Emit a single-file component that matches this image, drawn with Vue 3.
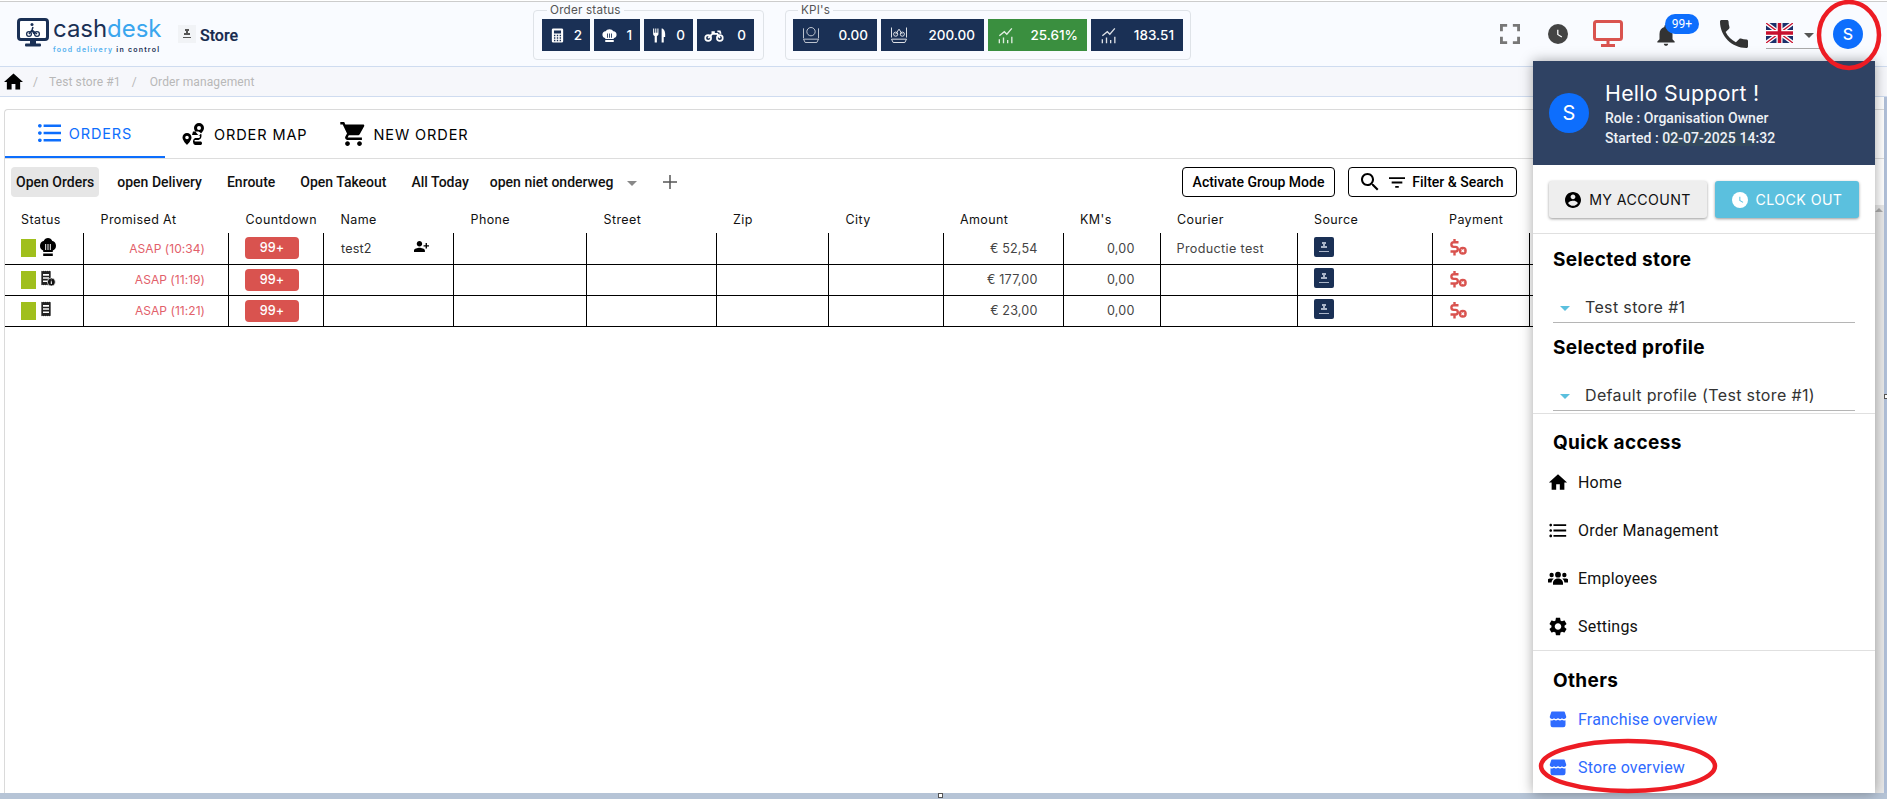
<script setup>
const p = {
  home: 'M10 20v-6h4v6h5v-8h3L12 3 2 12h3v8z',
  list: 'M4 10.5c-.83 0-1.5.67-1.5 1.5s.67 1.5 1.5 1.5 1.5-.67 1.5-1.5-.67-1.5-1.5-1.5zm0-6c-.83 0-1.5.67-1.5 1.5S3.17 7.5 4 7.5 5.5 6.83 5.5 6 4.83 4.5 4 4.5zm0 12c-.83 0-1.5.68-1.5 1.5s.68 1.5 1.5 1.5 1.5-.68 1.5-1.5-.67-1.5-1.5-1.5zM7 19h14v-2H7v2zm0-6h14v-2H7v2zm0-8v2h14V5H7z',
  cart: 'M7 18c-1.1 0-1.99.9-1.99 2S5.9 22 7 22s2-.9 2-2-.9-2-2-2zM1 2v2h2l3.6 7.59-1.35 2.45c-.16.28-.25.61-.25.96 0 1.1.9 2 2 2h12v-2H7.42c-.14 0-.25-.11-.25-.25l.03-.12.9-1.63h7.45c.75 0 1.41-.41 1.75-1.03l3.58-6.49c.08-.14.12-.31.12-.48 0-.55-.45-1-1-1H5.21l-.94-2H1zm16 16c-1.1 0-1.99.9-1.99 2s.89 2 1.99 2 2-.9 2-2-.9-2-2-2z',
  bell: 'M12 22c1.1 0 2-.9 2-2h-4c0 1.1.89 2 2 2zm6-6v-5c0-3.07-1.64-5.64-4.5-6.32V4c0-.83-.67-1.5-1.5-1.5s-1.5.67-1.5 1.5v.68C7.63 5.36 6 7.92 6 11v5l-2 2v1h16v-1l-2-2z',
  phone: 'M6.62 10.79c1.44 2.83 3.76 5.14 6.59 6.59l2.2-2.2c.27-.27.67-.36 1.02-.24 1.12.37 2.33.57 3.57.57.55 0 1 .45 1 1V20c0 .55-.45 1-1 1-9.39 0-17-7.61-17-17 0-.55.45-1 1-1h3.5c.55 0 1 .45 1 1 0 1.25.2 2.45.57 3.57.11.35.03.74-.25 1.02l-2.2 2.2z',
  account: 'M12 2C6.48 2 2 6.48 2 12s4.48 10 10 10 10-4.48 10-10S17.52 2 12 2zm0 3c1.66 0 3 1.34 3 3s-1.34 3-3 3-3-1.34-3-3 1.34-3 3-3zm0 14.2c-2.5 0-4.71-1.28-6-3.22.03-1.99 4-3.08 6-3.08 1.99 0 5.97 1.09 6 3.08-1.29 1.94-3.5 3.22-6 3.22z',
  gear: 'M19.14 12.94c.04-.3.06-.61.06-.94 0-.32-.02-.64-.07-.94l2.03-1.58c.18-.14.23-.41.12-.61l-1.92-3.32c-.12-.22-.37-.29-.59-.22l-2.39.96c-.5-.38-1.03-.7-1.62-.94l-.36-2.54c-.04-.24-.24-.41-.48-.41h-3.84c-.24 0-.43.17-.47.41l-.36 2.54c-.59.24-1.13.57-1.62.94l-2.39-.96c-.22-.08-.47 0-.59.22L2.74 8.87c-.12.21-.08.47.12.61l2.03 1.58c-.05.3-.09.63-.09.94s.02.64.07.94l-2.03 1.58c-.18.14-.23.41-.12.61l1.92 3.32c.12.22.37.29.59.22l2.39-.96c.5.38 1.03.7 1.62.94l.36 2.54c.05.24.24.41.48.41h3.84c.24 0 .44-.17.47-.41l.36-2.54c.59-.24 1.13-.56 1.62-.94l2.39.96c.22.08.47 0 .59-.22l1.92-3.32c.12-.22.07-.47-.12-.61l-2.01-1.58zM12 15.6c-1.98 0-3.6-1.62-3.6-3.6s1.62-3.6 3.6-3.6 3.6 1.62 3.6 3.6-1.62 3.6-3.6 3.6z',
  users: 'M12 11a3.2 3.2 0 1 0 0-6.4 3.2 3.2 0 0 0 0 6.4zM5 10.5a2.4 2.4 0 1 0 0-4.8 2.4 2.4 0 0 0 0 4.8zm14 0a2.4 2.4 0 1 0 0-4.8 2.4 2.4 0 0 0 0 4.8zM12 12c-3 0-5.5 2-5.5 5v2h11v-2c0-3-2.5-5-5.5-5zM5.900 12H3c-1.700 0-3 1.300-3 3v1.500h4.900c.2-1.900 1-3.400 2.300-4.300-.4-.1-.8-.2-1.300-.2zM21 12h-2.900c-.5 0-.9.1-1.300.2 1.300.9 2.100 2.400 2.300 4.300H24V15c0-1.700-1.300-3-3-3z',
  store: 'M4 2h16a1 1 0 0 1 1 .7L23 9c0 1.700-1.300 3-3 3-1.100 0-2.200-.6-2.700-1.500-.5.9-1.500 1.500-2.600 1.500-1 0-2-.5-2.700-1.500-.7 1-1.700 1.500-2.700 1.500-1.100 0-2.100-.6-2.600-1.500C6.200 11.400 5.100 12 4 12c-1.700 0-3-1.300-3-3l2-6.300A1 1 0 0 1 4 2zm-2 11.600c.6.300 1.300.4 2 .4 1 0 2-.3 2.700-1 .7.700 1.700 1 2.600 1s2-.4 2.700-1c.7.600 1.700 1 2.700 1s1.900-.3 2.600-1c.7.700 1.700 1 2.700 1 .700 0 1.400-.1 2-.4V20a3 3 0 0 1-3 3H5a3 3 0 0 1-3-3v-6.400z',
  personAdd: 'M9 12c2.210 0 4-1.790 4-4s-1.790-4-4-4-4 1.790-4 4 1.790 4 4 4zm9-2V7h2v3h3v2h-3v3h-2v-3h-3v-2h3zM9 14c-2.670 0-8 1.340-8 4v2h16v-2c0-2.660-5.330-4-8-4z',
  search: 'M15.5 14h-.79l-.28-.27C15.41 12.59 16 11.11 16 9.5 16 5.91 13.09 3 9.5 3S3 5.910 3 9.500 5.910 16 9.500 16c1.610 0 3.090-.59 4.230-1.570l.27.28v.79l5 4.990L20.490 19l-4.990-5zm-6 0C7.010 14 5 11.990 5 9.500S7.010 5 9.500 5 14 7.010 14 9.500 11.990 14 9.500 14z',
  filter: 'M10 18h4v-2h-4v2zM3 6v2h18V6H3zm3 7h12v-2H6v2z',
  full: 'M7 14H5v5h5v-2H7v-3zm-2-4h2V7h3V5H5v5zm12 7h-3v2h5v-5h-2v3zM14 5v2h3v3h2V5h-5z',
  route: 'M17 1a5 5 0 0 0-5 5c0 2.800 3.500 6.300 5 7.500 1.500-1.200 5-4.700 5-7.500a5 5 0 0 0-5-5zm0 3a2 2 0 1 1 0 4 2 2 0 0 1 0-4zM5 11a4.500 4.500 0 0 0-4.500 4.500C.5 18 3.500 21.500 5 23c1.500-1.500 4.500-5 4.500-7.500A4.500 4.500 0 0 0 5 11zm0 2.700a1.800 1.800 0 1 1 0 3.600 1.800 1.800 0 0 1 0-3.600zM10 13h6.500a1.500 1.500 0 0 1 0 3H13a4 4 0 0 0 0 7h6a2 2 0 0 0 0-3.500h-6a.8.8 0 0 1 0-1.500h3.500a4.500 4.500 0 0 0 0-8.500H11z',
  chef: 'M6 15.500C3.500 15 2 13.200 2 10.800 2 8.200 4 6 6.600 6.100 7.600 4.200 9.600 3 12 3s4.400 1.200 5.400 3.100C20 6 22 8.200 22 10.800c0 2.400-1.500 4.200-4 4.700V17H6v-1.500zM6 18.500h12V21H6zM8.500 9h1.200v6H8.500zM11.400 9h1.200v6h-1.200zM14.300 9h1.200v6h-1.200z',
  receipt: 'M5 1l1.500 1L8 1l1.500 1L11 1l1.500 1L14 1l1.500 1L17 1l2 1v20l-2 1-1.500-1-1.500 1-1.500-1-1.500 1-1.500-1L8 23l-1.500-1L5 23zm2.500 5v2.500h9V6zm0 4.800v2.500h9v-2.500zm0 4.800v2.500h9v-2.500z',
  fork: 'M3 2h1.500v6H6V2h1.500v6H9V2h1.500v8c0 1.500-1 2.500-2.200 2.800V22H5.200v-9.200C4 12.500 3 11.500 3 10zM15 2c3 0 5 3.500 5 8v4h-2v8h-3z',
  calc: 'M6 2h12a2 2 0 0 1 2 2v16a2 2 0 0 1-2 2H6a2 2 0 0 1-2-2V4a2 2 0 0 1 2-2zm1 3v4h10V5zm0 6v2h2v-2zm4 0v2h2v-2zm4 0v2h2v-2zm-8 3.500v2h2v-2zm4 0v2h2v-2zm4 0v2h2v-2zM7 18v2h2v-2zm4 0v2h2v-2zm4 0v2h2v-2z',
  clockHand: 'M12.500 7H11v6l5.200 3.100.8-1.200-4.500-2.700z'
}

const statusBoxes = [
  { icon: 'calc', value: '2' },
  { icon: 'chef', value: '1' },
  { icon: 'fork', value: '0' },
  { icon: 'bike', value: '0' }
]

const kpis = [
  { icon: 'coins', value: '0.00', cls: 'w84' },
  { icon: 'bikebag', value: '200.00', cls: 'w103' },
  { icon: 'growth', value: '25.61%', cls: 'w99 green' },
  { icon: 'growth', value: '183.51', cls: 'w92' }
]

const columns = [
  { label: 'Status', w: 78.5 },
  { label: 'Promised At', w: 145 },
  { label: 'Countdown', w: 95 },
  { label: 'Name', w: 130 },
  { label: 'Phone', w: 133 },
  { label: 'Street', w: 129.5 },
  { label: 'Zip', w: 112.5 },
  { label: 'City', w: 114.5 },
  { label: 'Amount', w: 120 },
  { label: "KM's", w: 97 },
  { label: 'Courier', w: 137 },
  { label: 'Source', w: 135 },
  { label: 'Payment', w: 97 },
  { label: '', w: 60 }
]

const orders = [
  { kind: 'chef', time: 'ASAP (10:34)', name: 'test2', amount: '€ 52,54', courier: 'Productie test' },
  { kind: 'receiptInfo', time: 'ASAP (11:19)', name: '', amount: '€ 177,00', courier: '' },
  { kind: 'receipt', time: 'ASAP (11:21)', name: '', amount: '€ 23,00', courier: '' }
]

const filters = ['open Delivery', 'Enroute', 'Open Takeout', 'All Today']

const quick = [
  { icon: 'home', label: 'Home' },
  { icon: 'list', label: 'Order Management' },
  { icon: 'users', label: 'Employees' },
  { icon: 'gear', label: 'Settings' }
]
const others = ['Franchise overview', 'Store overview']
</script>

<template>
  <div class="app">
    <header class="header">
      <div class="brand">
        <svg class="logo-mark" viewBox="0 0 32 30">
          <rect x="1.500" y="1.500" width="29" height="20" rx="2.500" fill="#fff" stroke="#1a3055" stroke-width="3" />
          <rect x="13" y="22" width="6" height="4" fill="#1a3055" />
          <rect x="8" y="25.500" width="16" height="3" rx="1" fill="#1a3055" />
          <circle cx="12" cy="16" r="2.400" fill="none" stroke="#1a3055" stroke-width="1.300" />
          <circle cx="20" cy="16" r="2.400" fill="none" stroke="#1a3055" stroke-width="1.300" />
          <path d="M12 16l3-4 5 4M15 12l2 4M16 9l-1 3" fill="none" stroke="#1a3055" stroke-width="1.500" />
          <circle cx="15" cy="6.500" r="1.500" fill="#1a3055" />
        </svg>
        <div class="wordmark">
          <div class="word"><span class="cash">cash</span><span class="desk">desk</span></div>
          <div class="tag"><span class="tag-blue">food delivery</span> in control</div>
        </div>
        <div class="store-thumb">
          <svg viewBox="0 0 18 18"><path d="M7 4h4v2h-1v2h2v2H6V8h2V6H7zM5 12h8v1H5z" fill="#555" /></svg>
        </div>
        <span class="store-name">Store</span>
      </div>

      <fieldset class="group status-group">
        <legend>Order status</legend>
        <div class="boxes">
          <div v-for="b in statusBoxes" :key="b.icon" class="box" :class="'b-' + b.icon">
            <svg v-if="b.icon === 'bike'" class="box-icon bike" viewBox="0 0 24 16">
              <circle cx="5" cy="11" r="3.500" fill="none" stroke="#fff" stroke-width="2" />
              <circle cx="19" cy="11" r="3.500" fill="none" stroke="#fff" stroke-width="2" />
              <path d="M5 11l5-5h6l3 5M9 4h4M16 3h3l1 3" fill="none" stroke="#fff" stroke-width="2.200" />
            </svg>
            <svg v-else class="box-icon" viewBox="0 0 24 24"><path :d="p[b.icon]" fill="#fff" fill-rule="evenodd" /></svg>
            <span>{{ b.value }}</span>
          </div>
        </div>
      </fieldset>

      <fieldset class="group kpi-group">
        <legend>KPI's</legend>
        <div class="boxes">
          <div v-for="k in kpis" :key="k.value" class="box kpi" :class="k.cls">
            <svg v-if="k.icon === 'coins'" class="kpi-icon" viewBox="0 0 24 24" fill="none" stroke="#fff" stroke-width="1">
              <circle cx="12" cy="8" r="5" /><path d="M3 4v12M21 4v12M3 17h18l-2 4H5z" />
            </svg>
            <svg v-else-if="k.icon === 'bikebag'" class="kpi-icon" viewBox="0 0 24 24" fill="none" stroke="#fff" stroke-width="1.200">
              <circle cx="8" cy="11" r="2.500" /><circle cx="16" cy="11" r="2.500" /><path d="M8 11l4-6 4 6M3 3v12M21 3v12M3 17h18l-2 4H5z" />
            </svg>
            <svg v-else class="kpi-icon" viewBox="0 0 24 24" fill="none" stroke="#fff" stroke-width="1.600">
              <path d="M4 13l6-5 3 3 6-7M4 22v-5M9 22v-7M14 22v-4M19 22v-8" />
            </svg>
            <span>{{ k.value }}</span>
          </div>
        </div>
      </fieldset>

      <div class="actions">
        <svg class="a-full" viewBox="5 5 14 14"><path :d="p.full" fill="#777" /></svg>
        <svg class="a-clock" viewBox="0 0 24 24"><circle cx="12" cy="12" r="12" fill="#444" /><path :d="p.clockHand" fill="#fff" /></svg>
        <svg class="a-monitor" viewBox="0 0 30 27" fill="none" stroke="#d9534f">
          <rect x="1.500" y="1.500" width="27" height="18" rx="2" stroke-width="3" />
          <path d="M15 20v4M8 25.500h14" stroke-width="3" />
        </svg>
        <div class="a-bell">
          <svg viewBox="0 0 24 24"><path :d="p.bell" fill="#333" /></svg>
          <span class="badge">99+</span>
        </div>
        <svg class="a-phone" viewBox="3 3 18 18"><path :d="p.phone" fill="#333" /></svg>
        <div class="lang">
          <svg class="flag" viewBox="0 0 27 20">
            <rect width="27" height="20" fill="#1b2f6b" />
            <path d="M0 0l27 20M27 0L0 20" stroke="#fff" stroke-width="4" />
            <path d="M0 0l27 20M27 0L0 20" stroke="#c8102e" stroke-width="1.300" />
            <path d="M13.500 0v20M0 10h27" stroke="#fff" stroke-width="6" />
            <path d="M13.500 0v20M0 10h27" stroke="#c8102e" stroke-width="3.500" />
          </svg>
          <i class="lang-caret"></i>
        </div>
        <div class="avatar small">S</div>
      </div>
    </header>

    <nav class="crumbs">
      <svg class="crumb-home" viewBox="2 3 20 17"><path :d="p.home" fill="#000" /></svg>
      <span class="sep first">/</span>
      <span>Test store #1</span>
      <span class="sep">/</span>
      <span>Order management</span>
    </nav>

    <div class="body">
      <main class="content">
        <div class="card">
          <div class="tabs">
            <div class="tab active">
              <svg class="t-list" viewBox="2.500 4.500 18.500 15" preserveAspectRatio="none"><path :d="p.list" fill="#0d6efd" /></svg>
              ORDERS
            </div>
            <div class="tab map">
              <svg class="t-route" viewBox="0 0 24 24"><path :d="p.route" fill="#000" fill-rule="evenodd" /></svg>
              ORDER MAP
            </div>
            <div class="tab new">
              <svg class="t-cart" viewBox="1 2 22 20"><path :d="p.cart" fill="#000" /></svg>
              NEW ORDER
            </div>
          </div>

          <div class="toolbar">
            <span class="pill selected">Open Orders</span>
            <span v-for="f in filters" :key="f" class="pill">{{ f }}</span>
            <span class="pill last">open niet onderweg</span>
            <i class="tool-caret"></i>
            <svg class="plus" viewBox="0 0 14 14"><path d="M7 0v14M0 7h14" stroke="#555" stroke-width="1.500" /></svg>
            <button class="outline group-btn" type="button">Activate Group Mode</button>
            <button class="outline filter-btn" type="button">
              <svg class="btn-search" viewBox="3 3 18 18"><path :d="p.search" fill="#000" /></svg>
              <svg class="btn-filter" viewBox="3 6 18 12"><path :d="p.filter" fill="#000" /></svg>
              Filter &amp; Search
            </button>
          </div>

          <table class="orders">
            <colgroup>
              <col v-for="c in columns" :key="c.label" :style="{ width: c.w + 'px' }" />
            </colgroup>
            <thead>
              <tr><th v-for="c in columns" :key="c.label">{{ c.label }}</th></tr>
            </thead>
            <tbody>
              <tr v-for="o in orders" :key="o.time">
                <td class="c-status">
                  <div class="status-cell">
                    <i class="sq"></i>
                    <svg v-if="o.kind === 'chef'" class="st-icon" viewBox="2 3 20 18" preserveAspectRatio="none"><path :d="p.chef" fill="#000" fill-rule="evenodd" /></svg>
                    <svg v-else class="st-icon" viewBox="3 0 24 24">
                      <path :d="p.receipt" fill="#222" fill-rule="evenodd" />
                      <template v-if="o.kind === 'receiptInfo'">
                        <circle cx="20" cy="18" r="6" fill="#111" stroke="#fff" stroke-width="1" />
                        <path d="M20 17v4M20 14.500v1" stroke="#fff" stroke-width="1.600" />
                      </template>
                    </svg>
                  </div>
                </td>
                <td class="right time">{{ o.time }}</td>
                <td class="c-count"><span class="count">99+</span></td>
                <td class="c-name">
                  <div class="name-cell">
                    <span class="name-text">{{ o.name }}</span>
                    <svg v-if="o.name" class="add-person" viewBox="1 4 22 16"><path :d="p.personAdd" fill="#000" /></svg>
                  </div>
                </td>
                <td></td>
                <td></td>
                <td></td>
                <td></td>
                <td class="right">{{ o.amount }}</td>
                <td class="right">0,00</td>
                <td class="courier">{{ o.courier }}</td>
                <td class="c-source">
                  <div class="source">
                    <svg viewBox="0 0 20 20"><path d="M8 5h4v2h-1v2h2v2H7V9h2V7H8zM5 14h10v1H5z" fill="#aab5c8" /></svg>
                  </div>
                </td>
                <td class="c-pay">
                  <svg class="pay" viewBox="0 0 18 18">
                    <path d="M9.500 4.300H4.700a2.300 2.300 0 0 0 0 4.600h1.800a2.300 2.300 0 0 1 0 4.600H1.500M5.500 1v3M5.500 14v3.500" fill="none" stroke="#d9534f" stroke-width="2.400" />
                    <circle cx="13.800" cy="12.800" r="4" fill="#d9534f" />
                    <path d="M12.500 11.500l2.600 2.600M15.100 11.500l-2.600 2.600" stroke="#fff" stroke-width="1.100" />
                  </svg>
                </td>
                <td></td>
              </tr>
            </tbody>
          </table>
        </div>
        <div class="overflow-dots"><i></i><i></i></div>
        <div class="scrollbar"><i></i></div>
      </main>
      <div class="edge"><i></i></div>
    </div>
    <div class="bottom"><i></i></div>

    <aside class="panel">
      <div class="panel-head">
        <div class="avatar big">S</div>
        <div class="who">
          <div class="hello">Hello Support !</div>
          <div class="meta">Role : Organisation Owner</div>
          <div class="meta">Started : <span class="hl">02-07-2025 14</span>:32</div>
        </div>
      </div>
      <div class="panel-btns">
        <button class="pbtn account" type="button">
          <svg viewBox="2 2 20 20"><path :d="p.account" fill="#000" /></svg>
          MY ACCOUNT
        </button>
        <button class="pbtn clock" type="button">
          <svg viewBox="0 0 24 24"><circle cx="12" cy="12" r="12" fill="#fff" /><path :d="p.clockHand" fill="#5bc0de" /></svg>
          CLOCK OUT
        </button>
      </div>
      <section class="sect selects">
        <h3>Selected store</h3>
        <div class="select"><i></i>Test store #1</div>
        <h3 class="second">Selected profile</h3>
        <div class="select"><i></i>Default profile (Test store #1)</div>
      </section>
      <section class="sect quick">
        <h3>Quick access</h3>
        <a v-for="q in quick" :key="q.label" class="link">
          <svg viewBox="1 2 22 20"><path :d="p[q.icon]" fill="#000" /></svg>
          {{ q.label }}
        </a>
      </section>
      <section class="sect others">
        <h3>Others</h3>
        <a v-for="o in others" :key="o" class="link blue">
          <svg viewBox="0 0 24 24"><path :d="p.store" fill="#2f6bff" /></svg>
          {{ o }}
        </a>
      </section>
    </aside>

    <svg class="mark mark-avatar" viewBox="0 0 64 70"><ellipse cx="32" cy="35" rx="30" ry="33" /></svg>
    <svg class="mark mark-store" viewBox="0 0 178 54"><ellipse cx="89" cy="27" rx="87" ry="25" /></svg>
  </div>
</template>

<style>
html, body { margin: 0; padding: 0; background: #fff; overflow: hidden; }
</style>

<style scoped>
.app {
  position: relative;
  display: flex;
  flex-direction: column;
  width: 100%;
  height: 100vh;
  overflow: hidden;
  padding-top: 1px;
  box-sizing: border-box;
  font-family: Roboto, "Liberation Sans", sans-serif;
  color: #000;
  background: #fff;
}
svg { display: block; flex: none; }

.header {
  display: flex;
  align-items: flex-start;
  height: 64px;
  flex: none;
  background: #f9fbff;
  border-top: 1px solid #ccc;
  border-bottom: 1px solid #cfdcf0;
}
.brand {
  width: 533px;
  flex: none;
  display: flex;
  align-items: flex-start;
  padding-left: 17px;
  box-sizing: border-box;
}
.logo-mark { width: 32px; height: 30px; margin-top: 16px; }
.wordmark { margin-left: 4px; margin-top: 11px; width: 112px; }
.word {
  font-family: Inter, sans-serif;
  font-size: 24px;
  line-height: 32px;
  letter-spacing: -0.05px;
  font-weight: 400;
  color: #1a3055;
}
.desk { color: #3aa6ee; }
.tag {
  font-family: Inter, sans-serif;
  font-size: 7px;
  line-height: 9px;
  font-weight: 600;
  letter-spacing: 1.22px;
  color: #1a3055;
  white-space: nowrap;
}
.tag-blue { color: #53b0ee; }
.store-thumb {
  width: 18px;
  height: 18px;
  margin: 23px 0 0 13px;
  background: #f1f3f6;
}
.store-thumb svg { width: 18px; height: 18px; }
.store-name {
  margin: 22px 0 0 4px;
  font-size: 16px;
  line-height: 24px;
  font-weight: 500;
  color: #16294d;
  -webkit-text-stroke: 0.2px #16294d;
}

.group {
  flex: none;
  box-sizing: border-box;
  margin: 2px 0 0;
  padding: 0 8px;
  height: 56px;
  border: 1px solid #dfe3e8;
  border-radius: 4px;
  min-width: 0;
}
.group legend {
  margin-left: 5px;
  padding: 0 3px;
  font-family: Inter, sans-serif;
  font-size: 11.700px;
  line-height: 13px;
  color: #555;
  letter-spacing: 0.2px;
}
.status-group { width: 231px; }
.kpi-group { width: 406px; margin-left: 21px; padding: 0 7px; }
.boxes { display: flex; gap: 4px; margin-top: 2px; }
.box {
  display: flex;
  align-items: center;
  justify-content: space-between;
  height: 32px;
  box-sizing: border-box;
  padding: 0 8px;
  background: #1a3055;
  color: #fff;
  font-family: Inter, sans-serif;
  font-size: 13.500px;
  font-weight: 500;
}
.b-calc { width: 48px; }
.b-chef { width: 46px; }
.b-fork { width: 49px; }
.b-bike { width: 57px; }
.box-icon { width: 17px; height: 19px; margin-left: -1px; }
.box-icon.bike { width: 20px; height: 15px; }
.kpi { padding: 0 9px 0 8px; }
.w84 { width: 84px; }
.w103 { width: 103px; }
.w99 { width: 99px; }
.w92 { width: 92px; }
.green { background: #3a8f3f; }
.kpi-icon { width: 20px; height: 20px; opacity: 0.85; }

.actions {
  flex: 1;
  position: relative;
  height: 60px;
}
.actions > * { position: absolute; }
.a-full { left: 308px; top: 22px; width: 22px; height: 20px; }
.a-clock { left: 357px; top: 22px; width: 20px; height: 20px; }
.a-monitor { left: 402px; top: 18px; width: 30px; height: 27px; }
.a-bell { left: 463px; top: 21px; width: 24px; height: 24px; }
.a-bell svg { width: 26px; height: 26px; margin: -1px 0 0 -1px; }
.badge {
  position: absolute;
  left: 11px;
  top: -9px;
  width: 34px;
  height: 20px;
  border-radius: 10px;
  background: #0d6efd;
  color: #fff;
  font-size: 12px;
  line-height: 20px;
  text-align: center;
}
.a-phone { left: 529px; top: 18px; width: 28px; height: 28px; }
.lang {
  left: 575px;
  top: 21px;
  width: 54px;
  height: 25px;
  border-bottom: 1px solid #aaa;
}
.flag { width: 27px; height: 20px; }
.lang-caret {
  position: absolute;
  left: 38px;
  top: 10px;
  border: 5px solid transparent;
  border-top-color: #555;
  border-bottom: 0;
}
.avatar {
  border-radius: 50%;
  background: #0d6efd;
  color: #fff;
  display: flex;
  align-items: center;
  justify-content: center;
  font-family: Inter, sans-serif;
}
.avatar.small { left: 642px; top: 17px; width: 30px; height: 30px; font-size: 16px; font-weight: 500; }

.crumbs {
  flex: none;
  height: 29px;
  background: #f6f7fb;
  border-bottom: 1px solid #cfdcf0;
  display: flex;
  align-items: center;
  padding-left: 4px;
  font-size: 12px;
  color: #b8b8b8;
  letter-spacing: 0.1px;
}
.crumb-home { width: 19px; height: 17px; }
.sep { margin: 0 13px 0 11px; }
.sep.first { margin: 0 11px 0 10px; }

.body { flex: 1; display: flex; min-height: 0; }
.content { flex: 1; min-width: 0; display: flex; padding: 12px 0 0 4px; position: relative; }
.card {
  flex: 1;
  min-width: 0;
  overflow: hidden;
  border-left: 1px solid #dadada;
  border-top: 1px solid #dadada;
  border-top-left-radius: 4px;
}
.tabs {
  display: flex;
  height: 48px;
  border-bottom: 1px solid #ddd;
  font-family: Inter, sans-serif;
  font-size: 14.500px;
  letter-spacing: 0.9px;
}
.tab { display: flex; align-items: center; gap: 8px; box-sizing: border-box; height: 48px; }
.tab.active {
  width: 160px;
  justify-content: center;
  color: #0d6efd;
  border-bottom: 2px solid #0d6efd;
}
.tab.map { margin-left: 17px; }
.tab.new { margin-left: 33px; gap: 6px; }
.t-list { width: 23px; height: 18px; }
.t-route { width: 24px; height: 24px; }
.t-cart { width: 27px; height: 24px; }

.toolbar {
  display: flex;
  align-items: center;
  height: 30px;
  margin: 8px 0 8px 6px;
  font-size: 14px;
  font-weight: 500;
  color: #111;
}
.pill {
  height: 30px;
  line-height: 30px;
  padding: 0 5px;
  border-radius: 4px;
  margin-right: 15px;
  white-space: nowrap;
}
.pill.selected { background: #e6e6e6; margin-right: 13px; }
.pill.last { margin-left: -4px; margin-right: 12px; }
.tool-caret {
  border: 5px solid transparent;
  border-top-color: #888;
  border-bottom: 0;
  margin: 2px 0 0 -3px;
}
.plus { width: 14px; height: 14px; margin-left: 26px; }
.outline {
  height: 30px;
  box-sizing: border-box;
  border: 1px solid #000;
  border-radius: 4px;
  background: #fff;
  font-family: inherit;
  font-size: 14px;
  font-weight: 500;
  color: #000;
  padding: 0;
  display: flex;
  align-items: center;
  justify-content: center;
}
.group-btn { width: 153px; margin-left: auto; }
.filter-btn { width: 169px; margin-left: 13px; margin-right: 367px; }
.btn-search { width: 18px; height: 18px; margin-right: 10px; }
.btn-filter { width: 16px; height: 11px; margin-right: 7px; }

.orders {
  table-layout: fixed;
  border-collapse: collapse;
  width: 1584px;
  font-family: Inter, sans-serif;
  font-size: 12.600px;
  letter-spacing: 0.15px;
}
.orders th {
  height: 28px;
  padding: 0 0 0 17px;
  text-align: left;
  font-weight: 400;
  white-space: nowrap;
  color: #111;
  font-size: 12.500px;
  letter-spacing: 0.4px;
}
.orders th:first-child { padding-left: 16px; }
.orders td {
  height: 31px;
  padding: 0 25px 0 16px;
  border-left: 1px solid #000;
  border-bottom: 1px solid #000;
  color: #444;
  white-space: nowrap;
  box-sizing: border-box;
}
.orders td:first-child { border-left: 0; }
.orders .right { text-align: right; }
.orders .time { color: #e2606a; font-size: 12px; letter-spacing: 0.05px; padding-right: 23px; }
.status-cell { display: flex; align-items: center; gap: 4px; }
.sq { width: 15px; height: 18px; background: #a0bf1c; }
.st-icon { width: 16px; height: 18px; margin-top: -3px; }
.orders .c-count { padding-right: 0; }
.count {
  display: block;
  width: 54px;
  height: 22px;
  line-height: 22px;
  text-align: center;
  background: #d9534f;
  border-radius: 4px;
  color: #fff;
  font-weight: 500;
}
.orders .c-name { padding-right: 0; color: #333; }
.name-cell { display: flex; align-items: center; padding-left: 1px; }
.name-text { width: 73px; height: 15px; line-height: 15px; }
.add-person { width: 15px; height: 11px; margin-top: -3px; }
.courier { letter-spacing: 0.35px; }
.source { width: 20px; height: 20px; background: #1a3055; border-radius: 2px; margin-top: -3px; }
.source svg { width: 20px; height: 20px; }
.pay { width: 18px; height: 18px; margin-top: -2px; }

.overflow-dots {
  position: absolute;
  right: 11px;
  top: 79px;
  display: flex;
  flex-direction: column;
  gap: 3px;
}
.overflow-dots i { width: 2px; height: 3px; background: #777; }
.scrollbar {
  position: absolute;
  right: 0;
  top: 108px;
  bottom: 0;
  width: 9px;
  background: #e9e9e9;
}
.scrollbar i {
  position: absolute;
  left: 0;
  top: 3px;
  border: 4.500px solid transparent;
  border-bottom-color: #aaa;
  border-top: 0;
}
.edge { flex: none; width: 3px; background: #b0bfd8; position: relative; }
.edge i {
  position: absolute;
  left: 0;
  top: 297px;
  width: 3px;
  height: 5px;
  border: 1px solid #555;
  border-right: 0;
  box-sizing: border-box;
  background: #fff;
}
.bottom { flex: none; height: 6px; background: #b6c4d6; position: relative; }
.bottom i {
  position: absolute;
  left: 938px;
  top: 0;
  width: 5px;
  height: 5px;
  border: 1px solid #555;
  box-sizing: border-box;
  background: #fff;
}

.panel {
  position: absolute;
  left: 1533px;
  top: 61px;
  width: 342px;
  height: 732px;
  overflow: hidden;
  background: #fff;
  box-shadow: 0 0 12px rgba(0, 0, 0, 0.35);
}
.panel-head {
  height: 104px;
  background: #2f4263;
  color: #fff;
  display: flex;
  padding: 0 0 0 16px;
  box-sizing: border-box;
}
.avatar.big { width: 40px; height: 40px; margin-top: 32px; font-size: 20px; flex: none; }
.who { margin-left: 16px; padding-top: 19px; }
.hello {
  font-family: Inter, sans-serif;
  font-size: 21.300px;
  line-height: 26px;
  letter-spacing: 0.3px;
  margin-bottom: 2px;
}
.meta { font-size: 14px; line-height: 20px; font-weight: 500; color: #eef1f5; letter-spacing: 0.05px; }
.hl { background: #33495d; }
.panel-btns {
  display: flex;
  gap: 8px;
  padding: 16px 16px 16px;
  height: 69px;
  box-sizing: border-box;
  border-bottom: 1px solid #e0e0e0;
}
.pbtn {
  height: 37px;
  border: 0;
  border-radius: 3px;
  display: flex;
  align-items: center;
  justify-content: center;
  gap: 8px;
  font-family: Inter, sans-serif;
  font-size: 14.200px;
  letter-spacing: 0.4px;
  padding: 0;
  box-shadow: 0 1px 3px rgba(0, 0, 0, 0.4);
}
.pbtn svg { width: 16px; height: 16px; }
.account { width: 158px; background: #eee; color: #111; }
.clock { width: 144px; background: #5bc0de; color: #fff; }
.sect h3 {
  margin: 0;
  font-family: Inter, sans-serif;
  font-size: 19px;
  line-height: 24px;
  font-weight: 700;
  letter-spacing: 0.35px;
  color: #000;
  padding-left: 20px;
}
.selects { padding-top: 14px; height: 180px; box-sizing: border-box; border-bottom: 1px solid #e0e0e0; }
.select {
  position: relative;
  margin: 23px 20px 0 20px;
  height: 28px;
  line-height: 24px;
  padding-left: 32px;
  border-bottom: 1px solid #b5b5b5;
  box-sizing: border-box;
  font-family: Inter, sans-serif;
  font-size: 16px;
  letter-spacing: 0.35px;
  color: #333;
}
.select i {
  position: absolute;
  left: 7px;
  top: 11px;
  border: 5.500px solid transparent;
  border-top-color: #5bc0de;
  border-bottom: 0;
}
.second { margin-top: 13px !important; }
.quick { padding-top: 17px; height: 237px; box-sizing: border-box; border-bottom: 1px solid #e0e0e0; }
.quick h3 { margin-bottom: 3px; }
.link {
  display: flex;
  align-items: center;
  height: 48px;
  padding-left: 15px;
  gap: 10px;
  font-size: 16px;
  letter-spacing: 0.2px;
  color: #111;
}
.link svg { width: 20px; height: 19px; }
.others { padding-top: 18px; }
.others h3 { margin-bottom: 2px; }
.link.blue { color: #2f6bff; }
.link.blue svg { width: 18px; height: 18px; margin: 0 1px; }

.mark { position: absolute; fill: none; stroke: #ed1c24; stroke-width: 4.500px; overflow: visible; pointer-events: none; }
.mark-avatar { left: 1817px; top: 0; width: 64px; height: 70px; }
.mark-store { left: 1539px; top: 739px; width: 178px; height: 54px; }
</style>
